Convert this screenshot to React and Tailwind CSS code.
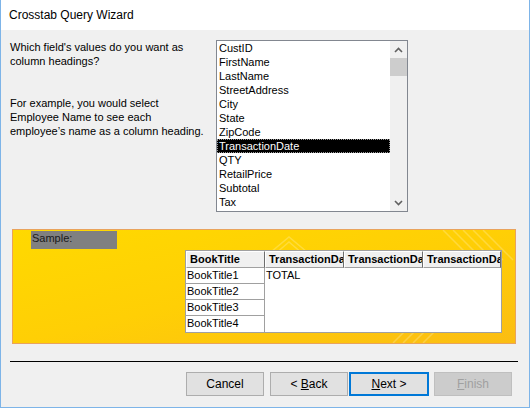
const fields = [
  'CustID', 'FirstName', 'LastName', 'StreetAddress', 'City', 'State', 'ZipCode',
  'TransactionDate', 'QTY', 'RetailPrice', 'Subtotal', 'Tax', 'Discount',
];

const font = "font-['Liberation_Sans',Arial,sans-serif]";

function HeaderCell({ children, w }) {
  return (
    <div className={`${w} h-[17px] shrink-0 overflow-hidden whitespace-nowrap bg-[#f0f0f0] border-t border-l border-t-white border-l-white border-r border-b border-r-[#6d6d6d] border-b-[#a0a0a0] pl-[3px] text-[11px] leading-[15px] font-bold text-black`}>
      {children}
    </div>
  );
}

export default function App() {
  return (
    <div className={`w-[530px] h-[408px] flex flex-col bg-[#f0f0f0] border-x border-b border-[#7db4e8] ${font} text-black overflow-hidden`}>
      <div className="h-[30px] shrink-0 bg-white flex items-center pl-[8px] text-[12px]">
        Crosstab Query Wizard
      </div>

      <div className="flex pl-[9px] pt-[10px]">
        <div className="w-[206px] text-[11px] leading-[14px]">
          <p>Which field's values do you want as<br />column headings?</p>
          <p className="mt-[28px]">
            For example, you would select<br />Employee Name to see each<br />employee’s name as a column heading.
          </p>
        </div>
        <div className="w-[192px] h-[172px] border border-[#828790] bg-white flex">
          <div className="flex-1 overflow-hidden">
            {fields.map((f) => (
              <div
                key={f}
                className={`h-[14px] pl-[2px] text-[11px] leading-[14px] whitespace-nowrap ${
                  f === 'TransactionDate'
                    ? 'bg-black text-white outline-1 outline-dotted outline-offset-[-1px] outline-[#9a9a9a]'
                    : ''
                }`}
              >
                {f}
              </div>
            ))}
          </div>
          <div className="w-[17px] bg-[#f0f0f0] flex flex-col items-center">
            <div className="h-[17px] flex items-center justify-center">
              <svg width="9" height="6" viewBox="0 0 9 6">
                <path d="M1 5 L4.5 1.5 L8 5" fill="none" stroke="#606060" strokeWidth="1.6" />
              </svg>
            </div>
            <div className="w-[17px] h-[18px] bg-[#cdcdcd]" />
            <div className="flex-1" />
            <div className="h-[17px] flex items-center justify-center">
              <svg width="9" height="6" viewBox="0 0 9 6">
                <path d="M1 1 L4.5 4.5 L8 1" fill="none" stroke="#606060" strokeWidth="1.6" />
              </svg>
            </div>
          </div>
        </div>
      </div>

      <div className="relative ml-[11px] mt-[17px] w-[504px] h-[115px] border border-[#e9a35c] bg-linear-to-br from-[#ffd900] via-[#ffcf05] to-[#fbbd12] overflow-hidden">
        <svg className="absolute inset-0" width="502" height="113" viewBox="0 0 502 113">
          <g fill="none" stroke="#ffffff" strokeOpacity="0.22" strokeWidth="1.5">
            <path d="M258 22 L276 7 L294 22" />
            <path d="M262 24 L276 12 L290 24" />
            <path d="M430 0 L460 30 M440 0 L470 30 M450 0 L480 30 M460 0 L490 30 M470 0 L500 30" />
            <path d="M380 113 L400 93 M390 113 L410 93 M400 113 L420 93 M410 113 L430 93" />
          </g>
        </svg>
        <div className="relative flex flex-col">
          <div className="ml-[18px] mt-[1px] w-[86px] h-[18px] bg-[#808080] pl-[1px] text-[11px] leading-[15px] text-[#1a1a1a]">
            Sample:
          </div>
          <div className="ml-[172px] mt-[1px] w-[317px] border border-[#a0a0a0] bg-white">
            <div className="flex">
              <HeaderCell w="w-[79px]">BookTitle</HeaderCell>
              <HeaderCell w="w-[79px]">TransactionDate</HeaderCell>
              <HeaderCell w="w-[79px]">TransactionDate</HeaderCell>
              <HeaderCell w="w-[78px]">TransactionDate</HeaderCell>
            </div>
            <div className="flex">
              <div className="w-[79px] border-r border-[#a0a0a0]">
                {['BookTitle1', 'BookTitle2', 'BookTitle3', 'BookTitle4'].map((t, i) => (
                  <div
                    key={t}
                    className={`h-[16px] pl-[1px] text-[11px] leading-[15px] ${i < 3 ? 'border-b border-[#a0a0a0]' : ''}`}
                  >
                    {t}
                  </div>
                ))}
              </div>
              <div className="flex-1 pl-[1px] text-[11px] leading-[15px]">TOTAL</div>
            </div>
          </div>
        </div>
      </div>

      <div className="ml-[9px] mt-[17px] w-[508px] h-px bg-black" />

      <div className="flex mt-[10px] ml-[185px] text-[12px]">
        <button className="w-[78px] h-[24px] bg-[#e1e1e1] border border-[#adadad]">Cancel</button>
        <button className="ml-[6px] w-[78px] h-[24px] bg-[#e1e1e1] border border-[#adadad]">
          &lt; <span className="underline">B</span>ack
        </button>
        <button className="ml-[1px] w-[80px] h-[24px] bg-[#e1e1e1] border-2 border-[#0078d7]">
          <span className="underline">N</span>ext &gt;
        </button>
        <button className="ml-[5px] w-[78px] h-[24px] bg-[#cccccc] border border-[#bfbfbf] text-[#a0a0a0]">
          <span className="underline">F</span>inish
        </button>
      </div>
    </div>
  );
}
